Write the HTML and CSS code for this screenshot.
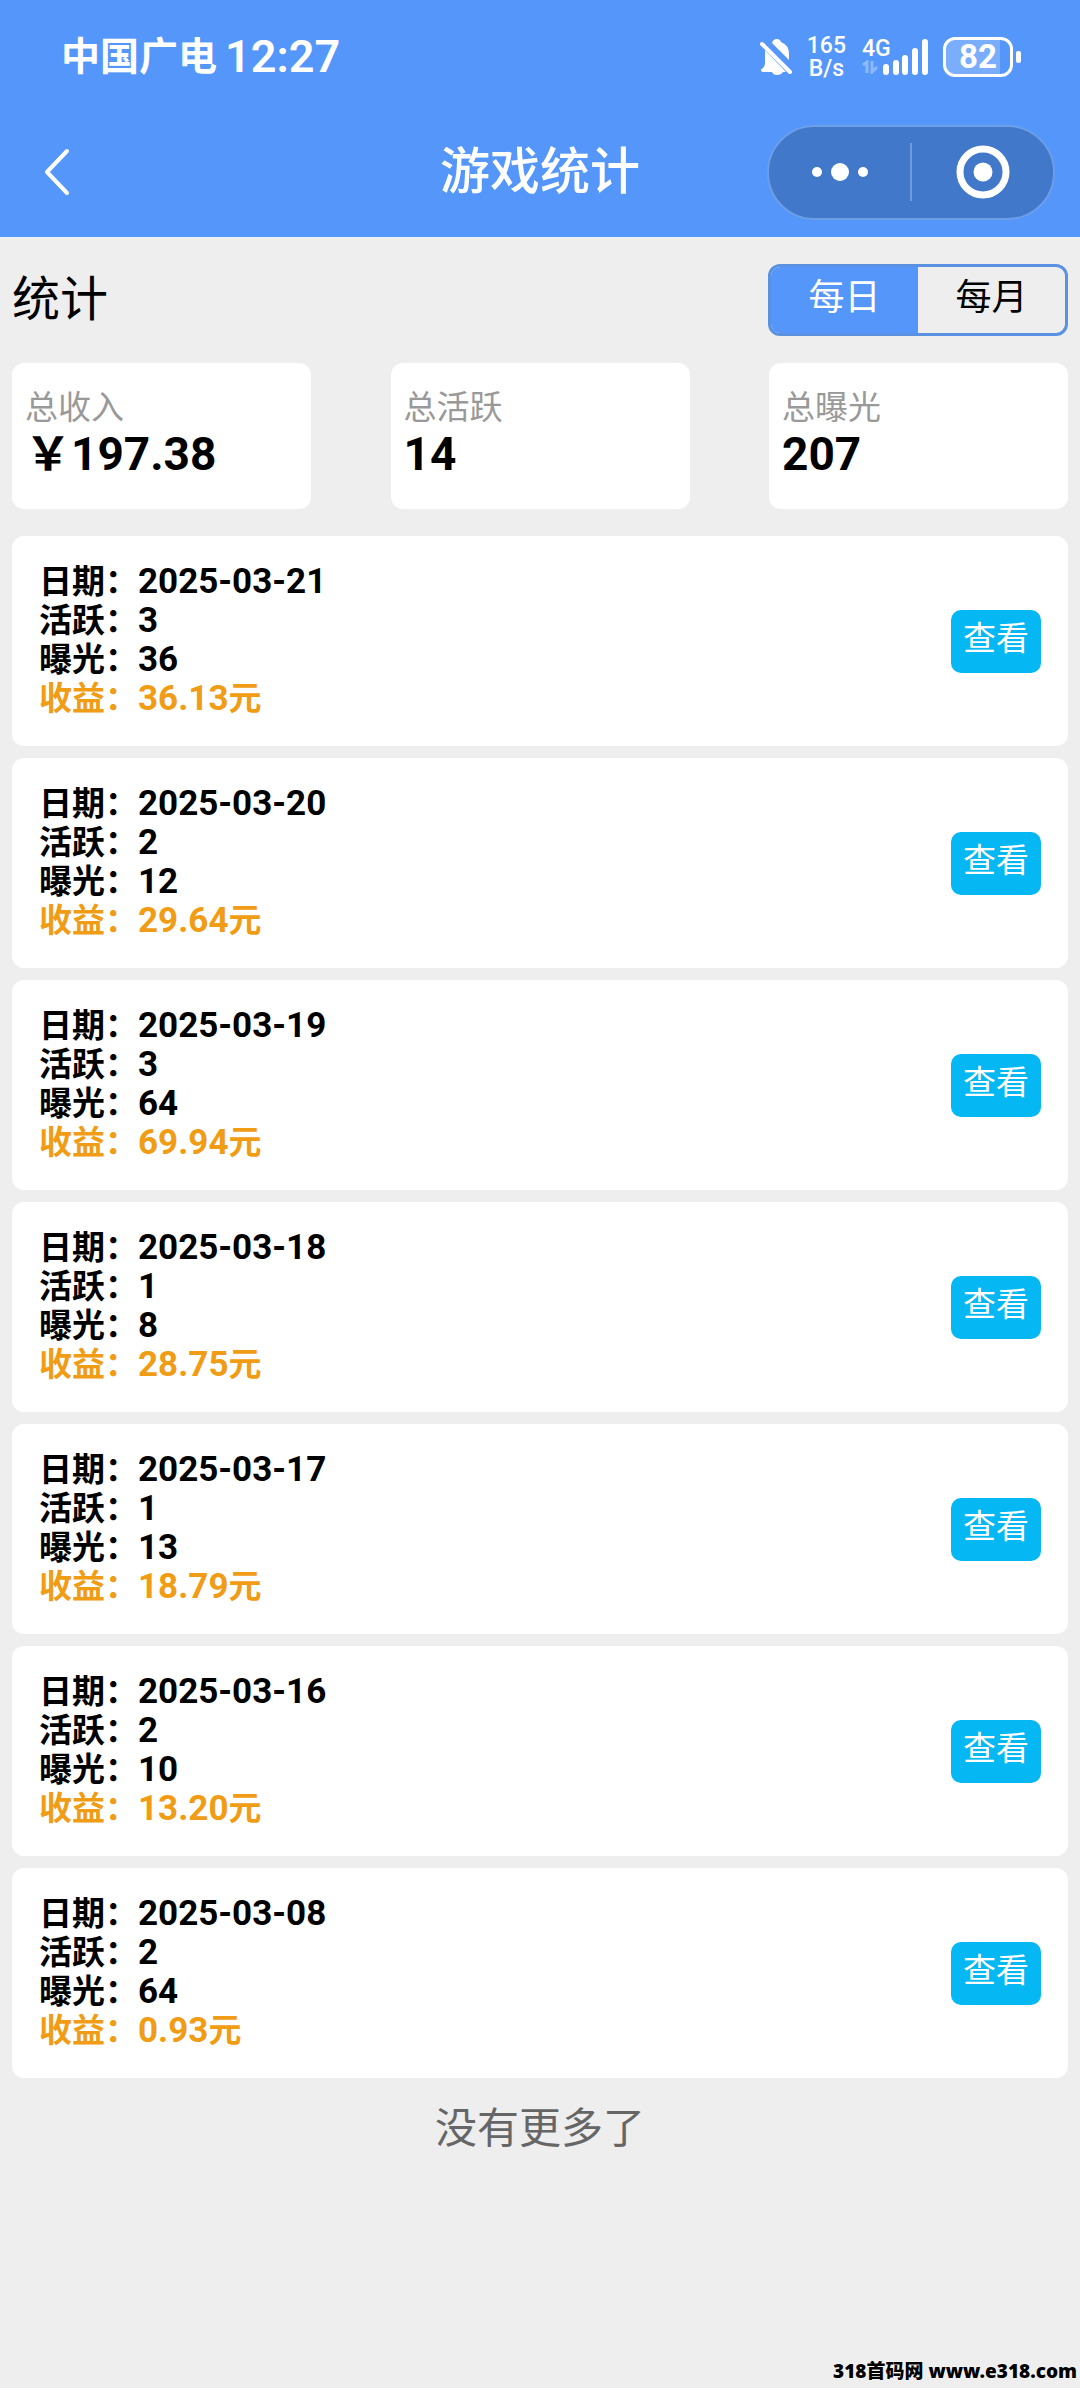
FILE: index.html
```
<!DOCTYPE html>
<html lang="zh-CN">
<head>
    <meta charset="UTF-8">
    <meta name="viewport" content="width=device-width, initial-scale=1.0">
    <title>游戏统计</title>
    <link rel="stylesheet" href="styles.css">
</head>
<body>
    <header class="header">
        <div class="status-bar">
            <div class="status-left">
                <span class="carrier">中国广电</span>
                <span class="clock">12:27</span>
            </div>
            <div class="status-right">
                <svg class="icon-bell" width="34" height="38" viewBox="0 0 34 38" fill="#fff">
                    <path d="M12 5 Q13 1 17 1 Q20 1 21 4 Q29 7 29 16 V22 Z"/>
                    <path d="M5 12 L26 34 H3 Q1 34 1 32 Q1 31 3 30 Q5 28 5 25 Z"/>
                    <path d="M12 34 H23 Q21 37 17 37 Q13 37 12 34 Z"/>
                    <path d="M2 6 L30 34" stroke="#fff" stroke-width="4" stroke-linecap="round"/>
                </svg>
                <div class="net-speed"><span>165</span><span>B/s</span></div>
                <div class="signal">
                    <div class="signal-type">
                        <span>4G</span>
                        <svg width="16" height="14" viewBox="0 0 16 14" fill="none" stroke="#8cbafc" stroke-width="3">
                            <path d="M1 5 L5 2 V13 M10 1 V12 L15 7"/>
                        </svg>
                    </div>
                    <svg width="46" height="38" viewBox="0 0 46 38" stroke="#fff" stroke-width="6" stroke-linecap="round">
                        <path d="M4 29 V34 M14 25 V34 M23 20 V34 M33 13 V34 M43 4 V34"/>
                    </svg>
                </div>
                <div class="battery">
                    <div class="battery-body">82</div>
                    <div class="battery-tip"></div>
                </div>
            </div>
        </div>

        <nav class="nav-bar">
            <button class="back" type="button" aria-label="返回">
                <svg width="26" height="48" viewBox="0 0 26 48" fill="none" stroke="#fff" stroke-width="4" stroke-linecap="round" stroke-linejoin="round">
                    <path d="M23 3 L3 24 L23 45"/>
                </svg>
            </button>
            <h1 class="nav-title">游戏统计</h1>
            <div class="capsule">
                <button type="button" aria-label="更多">
                    <svg width="58" height="20" viewBox="0 0 58 20" fill="#fff">
                        <circle cx="6" cy="10" r="5"/>
                        <circle cx="29" cy="10" r="9"/>
                        <circle cx="52" cy="10" r="5"/>
                    </svg>
                </button>
                <button type="button" aria-label="关闭">
                    <svg width="54" height="54" viewBox="0 0 54 54">
                        <circle cx="27" cy="27" r="23" fill="none" stroke="#fff" stroke-width="7"/>
                        <circle cx="27" cy="27" r="9.5" fill="#fff"/>
                    </svg>
                </button>
            </div>
        </nav>
    </header>

    <main class="container">
        <div class="toolbar">
            <h2>统计</h2>
            <div class="tabs">
                <button class="tab active" type="button">每日</button>
                <button class="tab" type="button">每月</button>
            </div>
        </div>

        <div class="summary">
            <div class="summary-card">
                <span class="summary-label">总收入</span>
                <span class="summary-value">￥197.38</span>
            </div>
            <div class="summary-card">
                <span class="summary-label">总活跃</span>
                <span class="summary-value">14</span>
            </div>
            <div class="summary-card">
                <span class="summary-label">总曝光</span>
                <span class="summary-value">207</span>
            </div>
        </div>

        <ul class="records">
            <li class="record">
                <div class="record-info">
                    <p>日期：<span class="value">2025-03-21</span></p>
                    <p>活跃：<span class="value">3</span></p>
                    <p>曝光：<span class="value">36</span></p>
                    <p class="income">收益：<span class="value">36.13</span>元</p>
                </div>
                <button class="view" type="button">查看</button>
            </li>
            <li class="record">
                <div class="record-info">
                    <p>日期：<span class="value">2025-03-20</span></p>
                    <p>活跃：<span class="value">2</span></p>
                    <p>曝光：<span class="value">12</span></p>
                    <p class="income">收益：<span class="value">29.64</span>元</p>
                </div>
                <button class="view" type="button">查看</button>
            </li>
            <li class="record">
                <div class="record-info">
                    <p>日期：<span class="value">2025-03-19</span></p>
                    <p>活跃：<span class="value">3</span></p>
                    <p>曝光：<span class="value">64</span></p>
                    <p class="income">收益：<span class="value">69.94</span>元</p>
                </div>
                <button class="view" type="button">查看</button>
            </li>
            <li class="record">
                <div class="record-info">
                    <p>日期：<span class="value">2025-03-18</span></p>
                    <p>活跃：<span class="value">1</span></p>
                    <p>曝光：<span class="value">8</span></p>
                    <p class="income">收益：<span class="value">28.75</span>元</p>
                </div>
                <button class="view" type="button">查看</button>
            </li>
            <li class="record">
                <div class="record-info">
                    <p>日期：<span class="value">2025-03-17</span></p>
                    <p>活跃：<span class="value">1</span></p>
                    <p>曝光：<span class="value">13</span></p>
                    <p class="income">收益：<span class="value">18.79</span>元</p>
                </div>
                <button class="view" type="button">查看</button>
            </li>
            <li class="record">
                <div class="record-info">
                    <p>日期：<span class="value">2025-03-16</span></p>
                    <p>活跃：<span class="value">2</span></p>
                    <p>曝光：<span class="value">10</span></p>
                    <p class="income">收益：<span class="value">13.20</span>元</p>
                </div>
                <button class="view" type="button">查看</button>
            </li>
            <li class="record">
                <div class="record-info">
                    <p>日期：<span class="value">2025-03-08</span></p>
                    <p>活跃：<span class="value">2</span></p>
                    <p>曝光：<span class="value">64</span></p>
                    <p class="income">收益：<span class="value">0.93</span>元</p>
                </div>
                <button class="view" type="button">查看</button>
            </li>
        </ul>

        <p class="no-more">没有更多了</p>
    </main>

    <footer class="watermark">318首码网 www.e318.com</footer>
</body>
</html>
```

FILE: styles.css
```
* {
    box-sizing: border-box;
}

body {
    display: flex;
    flex-direction: column;
    min-height: 100vh;
    margin: 0;
    background-color: #eee;
    color: #000;
    font-family: Roboto, "Noto Sans CJK SC", sans-serif;
    font-size: 33px;
}

h1, h2, p, ul {
    margin: 0;
    padding: 0;
}

button {
    border: none;
    padding: 0;
    background: none;
    color: inherit;
    font: inherit;
    cursor: pointer;
}

svg {
    display: block;
}

/* Header */
.header {
    background-color: #5596fa;
    color: #fff;
    padding-bottom: 7px;
}

.status-bar {
    display: flex;
    justify-content: space-between;
    align-items: center;
    height: 114px;
    padding: 0 59px 0 61px;
    font-weight: 500;
}

.status-left,
.status-right {
    display: flex;
    align-items: center;
}

.status-left {
    gap: 8px;
    font-weight: 600;
    line-height: 60px;
}

.carrier {
    font-size: 39px;
}

.clock {
    font-size: 45px;
}

.net-speed {
    display: flex;
    flex-direction: column;
    align-items: center;
    margin: 0 16px 0 13px;
    font-size: 23px;
    line-height: 23px;
}

.signal {
    display: flex;
}

.signal-type {
    width: 20px;
    font-size: 23px;
    line-height: 22px;
}

.battery {
    display: flex;
    align-items: center;
    gap: 3px;
    margin-left: 15px;
}

.battery-body {
    width: 70px;
    height: 40px;
    border: 3px solid #fff;
    border-radius: 12px;
    background: linear-gradient(to right, #7aadfb 84%, #5596fa 84%);
    font-size: 33px;
    font-weight: 700;
    line-height: 34px;
    text-align: center;
}

.battery-tip {
    width: 5px;
    height: 12px;
    border-radius: 2px;
    background-color: #fff;
}

.nav-bar {
    display: grid;
    grid-template-columns: 1fr auto 1fr;
    align-items: center;
    height: 116px;
    padding: 0 25px;
}

.back {
    justify-self: start;
    margin-left: 19px;
}

.nav-title {
    font-size: 50px;
    font-weight: 500;
    line-height: 60px;
}

.capsule {
    display: flex;
    align-items: center;
    justify-self: end;
    width: 288px;
    height: 95px;
    border: 2px solid #6c9fe8;
    border-radius: 48px;
    background-color: #4278c9;
}

.capsule button {
    display: flex;
    flex: 1;
    align-items: center;
    justify-content: center;
    height: 58px;
}

.capsule button + button {
    border-left: 2px solid #6c9be0;
}

/* Content */
.container {
    display: flex;
    flex: 1;
    flex-direction: column;
    gap: 27px;
    padding: 27px 12px;
}

.toolbar {
    display: flex;
    justify-content: space-between;
    align-items: center;
}

.toolbar h2 {
    font-size: 48px;
    font-weight: 400;
    line-height: 72px;
}

.tabs {
    display: flex;
    width: 300px;
    height: 72px;
    border: 3px solid #5a91e0;
    border-radius: 12px;
    overflow: hidden;
}

.tab {
    flex: 1;
    padding-bottom: 4px;
    font-size: 36px;
    line-height: 60px;
}

.tab.active {
    background-color: #5596fa;
    color: #fff;
}

.summary {
    display: flex;
    justify-content: space-between;
}

.summary-card {
    display: flex;
    flex-direction: column;
    width: 299px;
    height: 146px;
    padding: 23px 13px;
    border-radius: 12px;
    background-color: #fff;
}

.summary-label {
    color: #999;
    line-height: 44px;
}

.summary-value {
    font-size: 46px;
    font-weight: 700;
    line-height: 48px;
}

.records {
    display: flex;
    flex-direction: column;
    gap: 12px;
    list-style: none;
}

.record {
    display: flex;
    justify-content: space-between;
    align-items: center;
    padding: 27px;
    border-radius: 12px;
    background-color: #fff;
}

.record-info {
    font-weight: 700;
}

.record-info p {
    height: 39px;
    line-height: 38px;
}

.value {
    font-size: 35px;
}

.income {
    color: #f09c14;
}

.view {
    width: 90px;
    height: 63px;
    padding-bottom: 4px;
    border-radius: 10px;
    background-color: #05b7f2;
    color: #fff;
    line-height: 56px;
}

.no-more {
    color: #666;
    font-size: 42px;
    line-height: 48px;
    text-align: center;
}

.watermark {
    padding: 0 3px 4px;
    font-family: "Noto Sans", "Noto Sans CJK SC", sans-serif;
    font-size: 19px;
    font-weight: 900;
    line-height: 26px;
    text-align: right;
    text-shadow: 0 0 2px #fff;
}
```
